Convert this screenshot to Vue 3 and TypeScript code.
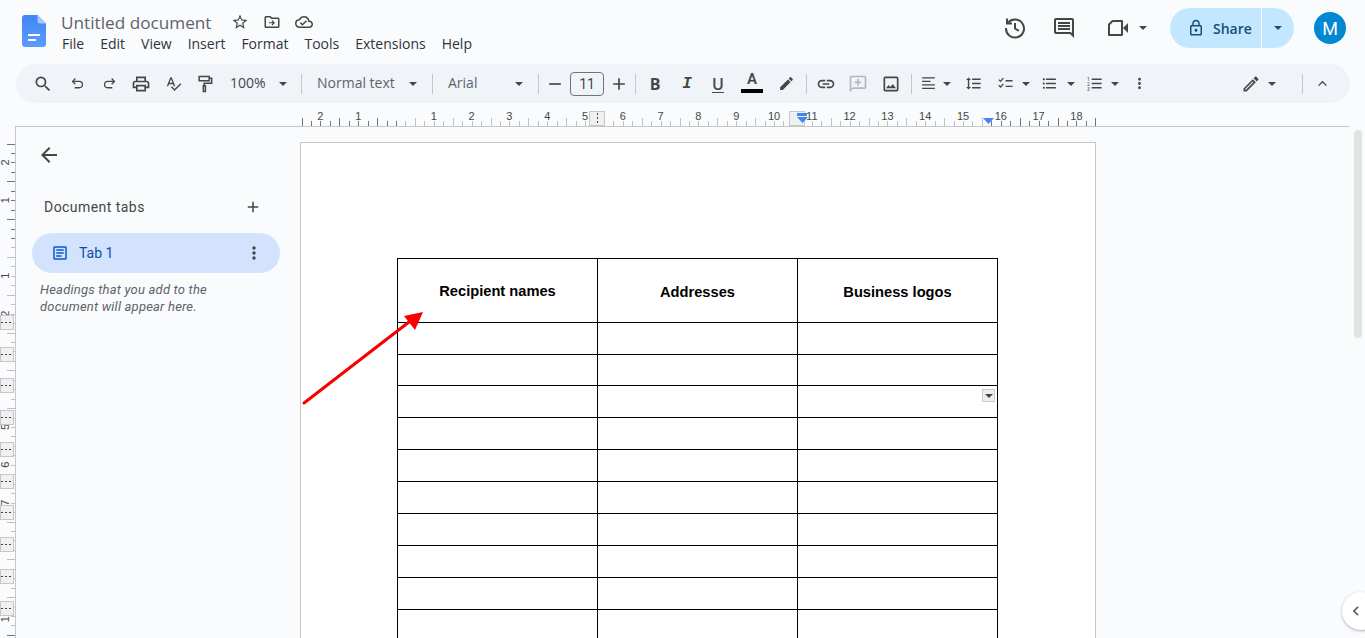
<script setup lang="ts">
import { computed } from 'vue'

interface ToolItem {
  t: 'icon' | 'caret' | 'sep' | 'gap' | 'label' | 'size' | 'letter' | 'color' | 'nums'
  w: number
  d?: string
  s?: string
  text?: string
  cls?: string
  pad?: number
}

const P = {
  search: 'M15.5 14h-.79l-.28-.27A6.471 6.471 0 0 0 16 9.5 6.5 6.5 0 1 0 9.5 16c1.61 0 3.09-.59 4.23-1.57l.27.28v.79l5 4.99L20.49 19l-4.99-5zm-6 0C7.01 14 5 11.99 5 9.5S7.01 5 9.5 5 14 7.01 14 9.5 11.99 14 9.5 14z',
  print: 'M19 8h-1V3H6v5H5c-1.66 0-3 1.34-3 3v6h4v4h12v-4h4v-6c0-1.66-1.34-3-3-3zM8 5h8v3H8V5zm8 12v2H8v-4h8v2zm2-2v-2H6v2H4v-4c0-.55.45-1 1-1h14c.55 0 1 .45 1 1v4h-2z',
  spell: 'M12.45 16h2.09L9.43 3H7.57L2.46 16h2.09l1.12-3h5.64l1.14 3zm-6.02-5L8.5 5.48 10.57 11H6.43zm15.16.59l-8.09 8.09L9.83 16l-1.41 1.41 5.09 5.09L23 13l-1.41-1.41z',
  pen: 'M3 17.25V21h3.75L17.81 9.94l-3.75-3.75L3 17.25zM20.71 7.04c.39-.39.39-1.02 0-1.41l-2.34-2.34c-.39-.39-1.02-.39-1.41 0l-1.83 1.83 3.75 3.75 1.83-1.83z',
  edit: 'M3 17.25V21h3.75L17.81 9.94l-3.75-3.75L3 17.25zM5.92 19H5v-.92l9.06-9.06.92.92L5.92 19zM20.71 5.63l-2.34-2.34c-.2-.2-.45-.29-.71-.29s-.51.1-.7.29l-1.83 1.83 3.75 3.75 1.83-1.83c.39-.39.39-1.02 0-1.41z',
  link: 'M3.9 12c0-1.71 1.39-3.1 3.1-3.1h4V7H7c-2.76 0-5 2.24-5 5s2.24 5 5 5h4v-1.9H7c-1.71 0-3.1-1.39-3.1-3.1zM8 13h8v-2H8v2zm9-6h-4v1.9h4c1.71 0 3.1 1.39 3.1 3.1s-1.39 3.1-3.1 3.1h-4V17h4c2.76 0 5-2.24 5-5s-2.24-5-5-5z',
  addComment: 'M20 2H4c-1.1 0-2 .9-2 2v18l4-4h14c1.1 0 2-.9 2-2V4c0-1.1-.9-2-2-2zm0 14H6l-2 2V4h16v12zM11 6h2v3h3v2h-3v3h-2v-3H8V9h3z',
  image: 'M19 5v14H5V5h14m0-2H5c-1.1 0-2 .9-2 2v14c0 1.1.9 2 2 2h14c1.1 0 2-.9 2-2V5c0-1.1-.9-2-2-2zm-4.86 8.86l-3 3.87L9 13.14 6 17h12l-3.86-5.14z',
  align: 'M3 3h18v1.800H3zM3 8h12v1.800H3zM3 13h18v1.800H3zM3 18h18v1.800H3z',
  spacing: 'M6 7h2.5L5 3.5 1.5 7H4v10H1.5L5 20.5 8.5 17H6V7zm4-2v2h12V5H10zm0 14h12v-2H10v2zm0-6h12v-2H10v2z',
  bullets: 'M4 10.5c-.83 0-1.5.67-1.5 1.5s.67 1.5 1.5 1.5 1.5-.67 1.5-1.5-.67-1.5-1.5-1.5zm0-6c-.83 0-1.5.67-1.5 1.5S3.17 7.500 4 7.500 5.500 6.830 5.500 6 4.830 4.500 4 4.500zm0 12c-.83 0-1.5.68-1.5 1.500s.68 1.500 1.500 1.500 1.500-.68 1.500-1.500-.67-1.500-1.500-1.500zM7 19h14v-2H7v2zm0-6h14v-2H7v2zm0-8v2h14V5H7z',
  lines: 'M8 5h14v2H8zM8 11h14v2H8zM8 17h14v2H8z',
  more: 'M12 8c1.100 0 2-.9 2-2s-.9-2-2-2-2 .9-2 2 .9 2 2 2zm0 2c-1.100 0-2 .9-2 2s.9 2 2 2 2-.9 2-2-.9-2-2-2zm0 6c-1.100 0-2 .9-2 2s.9 2 2 2 2-.9 2-2-.9-2-2-2z',
  star: 'M22 9.240l-7.190-.62L12 2 9.190 8.630 2 9.240l5.460 4.730L5.820 21 12 17.270 18.180 21l-1.630-7.030L22 9.240zM12 15.400l-3.760 2.270 1-4.280-3.320-2.880 4.380-.38L12 6.100l1.710 4.040 4.380.38-3.320 2.880 1 4.280L12 15.400z',
  folder: 'M20 6h-8l-2-2H4c-1.100 0-2 .9-2 2v12c0 1.100.9 2 2 2h16c1.100 0 2-.9 2-2V8c0-1.100-.9-2-2-2zm0 12H4V6h5.170l2 2H20v10zM12.500 9.500l3.500 3.500-3.500 3.500-1.100-1.100 1.600-1.600H8v-1.600h5l-1.600-1.600z',
  cloud: 'M19.350 10.040A7.490 7.490 0 0 0 12 4C9.110 4 6.600 5.640 5.350 8.040A5.994 5.994 0 0 0 0 14c0 3.310 2.690 6 6 6h13c2.760 0 5-2.240 5-5 0-2.640-2.050-4.780-4.650-4.960zM19 18H6c-2.210 0-4-1.790-4-4 0-2.050 1.530-3.760 3.560-3.970l1.070-.11.5-.95A5.469 5.469 0 0 1 12 6c2.620 0 4.880 1.860 5.390 4.430l.3 1.500 1.530.11A2.980 2.980 0 0 1 22 15c0 1.650-1.350 3-3 3zm-9-3.820l-2.090-2.090L6.500 13.500 10 17l6.010-6.010-1.410-1.410z',
  comment: 'M21.990 4c0-1.100-.89-2-1.990-2H4c-1.100 0-2 .9-2 2v12c0 1.100.9 2 2 2h14l4 4-.01-18zM20 4v13.170L18.830 16H4V4h16zM6 12h12v2H6zm0-3h12v2H6zm0-3h12v2H6z',
  lock: 'M18 8h-1V6c0-2.760-2.240-5-5-5S7 3.240 7 6v2H6c-1.100 0-2 .9-2 2v10c0 1.100.9 2 2 2h12c1.100 0 2-.9 2-2V10c0-1.100-.9-2-2-2zM9 6c0-1.660 1.340-3 3-3s3 1.340 3 3v2H9V6zm9 14H6V10h12v10zm-6-3c1.100 0 2-.9 2-2s-.9-2-2-2-2 .9-2 2 .9 2 2 2z',
  tabDoc: 'M19 5v14H5V5h14m0-2H5c-1.100 0-2 .9-2 2v14c0 1.100.9 2 2 2h14c1.100 0 2-.9 2-2V5c0-1.100-.9-2-2-2zM14 17H7v-2h7v2zm3-4H7v-2h10v2zm0-4H7V7h10v2z',
  plus: 'M19 13h-6v6h-2v-6H5v-2h6V5h2v6h6v2z'
}

const tools: ToolItem[] = [
  { t: 'icon', w: 32, d: P.search },
  { t: 'icon', w: 36, s: 'M9 5L5 9l4 4M5 9h9.500a4.500 4.500 0 0 1 0 9H8', cls: 'sm' },
  { t: 'icon', w: 28, s: 'M15 5l4 4-4 4M19 9H9.500a4.500 4.500 0 0 0 0 9H16', cls: 'sm' },
  { t: 'icon', w: 36, d: P.print },
  { t: 'icon', w: 28, d: P.spell, cls: 'sm' },
  { t: 'icon', w: 36, s: 'M5 3h12v5H5zM17 5h3v6h-9v3M10 14h2.500v7H10z' },
  { t: 'label', w: 48, text: '100%', pad: 7, cls: 'dark' },
  { t: 'caret', w: 24 },
  { t: 'sep', w: 13 },
  { t: 'label', w: 96, text: 'Normal text', pad: 9 },
  { t: 'caret', w: 18 },
  { t: 'sep', w: 20 },
  { t: 'label', w: 66, text: 'Arial', pad: 6 },
  { t: 'caret', w: 22 },
  { t: 'sep', w: 16 },
  { t: 'icon', w: 18, d: 'M5 11h14v2H5z' },
  { t: 'size', w: 46, text: '11' },
  { t: 'icon', w: 18, d: P.plus },
  { t: 'sep', w: 15 },
  { t: 'letter', w: 24, text: 'B', cls: 'bold' },
  { t: 'letter', w: 40, text: 'I', cls: 'ital' },
  { t: 'letter', w: 22, text: 'U', cls: 'under' },
  { t: 'color', w: 46, text: 'A' },
  { t: 'icon', w: 22, d: P.pen, cls: 'sm' },
  { t: 'sep', w: 18 },
  { t: 'icon', w: 22, d: P.link },
  { t: 'icon', w: 42, d: P.addComment, cls: 'off' },
  { t: 'icon', w: 24, d: P.image },
  { t: 'sep', w: 16 },
  { t: 'icon', w: 18, d: P.align, cls: 'sm' },
  { t: 'caret', w: 20 },
  { t: 'icon', w: 32, d: P.spacing, cls: 'sm' },
  { t: 'icon', w: 32, d: 'M12 7h10v2H12zM12 15h10v2H12z', s: 'M2.500 6.500l2.500 2.500 4-4.500M2.500 14.500l2.500 2.500 4-4.500', cls: 'sm' },
  { t: 'caret', w: 10 },
  { t: 'icon', w: 36, d: P.bullets, cls: 'sm' },
  { t: 'caret', w: 8 },
  { t: 'nums', w: 38, d: P.lines, cls: 'sm' },
  { t: 'caret', w: 4 },
  { t: 'icon', w: 44, d: P.more, cls: 'sm' },
  { t: 'gap', w: 74 },
  { t: 'icon', w: 32, d: P.edit },
  { t: 'caret', w: 10 },
  { t: 'gap', w: 18 },
  { t: 'sep', w: 14 },
  { t: 'icon', w: 26, s: 'M6.500 15L12 9.500l5.500 5.500', cls: 'sm' }
]

const menus = ['File', 'Edit', 'View', 'Insert', 'Format', 'Tools', 'Extensions', 'Help']

const hTicks = computed(() => {
  const out = []
  for (let i = -10; i <= 74; i++) {
    const x = 396 + i * 9.45
    out.push({
      x: Math.round(x) + 0.5,
      top: i % 4 === 2 || i % 4 === -2 ? 118 : 121,
      dark: x <= 398 || x >= 982
    })
  }
  return out
})
const hNums = computed(() => {
  const out = []
  for (let i = -2; i <= 18; i++) {
    if (i !== 0) out.push({ x: 396 + i * 37.8, n: Math.abs(i) })
  }
  return out
})

const vTicks = computed(() => {
  const out = []
  for (let i = -10; i <= 42; i++) {
    const y = 238 + i * 9.45
    out.push({
      y: Math.round(y) + 0.5,
      left: i % 4 === 2 || i % 4 === -2 ? 7 : 11,
      dark: y <= 240 || y >= 630
    })
  }
  return out
})
const vNums = computed(() => {
  const out = []
  for (let i = -2; i <= 10; i++) {
    if (i !== 0) out.push({ y: 238 + i * 37.8, n: Math.abs(i) })
  }
  return out
})
const rowMarks = [315, 347, 378, 410, 442, 474, 505, 537, 569, 601]

const rows = [32, 31, 32, 32, 32, 32, 32, 32, 32, 32, 32]
</script>

<template>
  <div class="app">
    <header class="topbar">
      <svg class="logo" width="24" height="32" viewBox="0 0 24 32">
        <defs>
          <linearGradient id="docBlue" x1="0" y1="0" x2="0" y2="1">
            <stop offset="0" stop-color="#4285f4" />
            <stop offset="1" stop-color="#5c9bff" />
          </linearGradient>
        </defs>
        <path d="M3 0h12.500L24 8.500V29a3 3 0 0 1-3 3H3a3 3 0 0 1-3-3V3a3 3 0 0 1 3-3z" fill="url(#docBlue)" />
        <path d="M15.500 0L24 8.500h-6a2.500 2.500 0 0 1-2.500-2.500z" fill="#a8c7fa" />
        <path d="M6 19h12v2H6zM6 24h8v2H6z" fill="#fff" />
      </svg>
      <div class="titles">
        <div class="title-row">
          <span class="doc-title">Untitled document</span>
          <svg class="ti first" viewBox="0 0 24 24"><path :d="P.star" /></svg>
          <svg class="ti" viewBox="0 0 24 24"><path :d="P.folder" /></svg>
          <svg class="ti" viewBox="0 0 24 24"><path :d="P.cloud" /></svg>
        </div>
        <nav class="menus">
          <span v-for="m in menus" :key="m">{{ m }}</span>
        </nav>
      </div>
      <div class="actions">
        <svg class="ai" viewBox="0 0 24 24">
          <path d="M5.300 6.500A9 9 0 1 1 3 12" fill="none" stroke="currentColor" stroke-width="2" />
          <path d="M4 2.500v5h5" fill="none" stroke="currentColor" stroke-width="2" />
          <path d="M12 7v5.500l3.800 2.300" fill="none" stroke="currentColor" stroke-width="2" />
        </svg>
        <svg class="ai comment" viewBox="0 0 24 24"><path :d="P.comment" /></svg>
        <svg class="ai video" viewBox="0 0 24 24">
          <path d="M6.500 5H16v14H3V8.500z" fill="none" stroke="currentColor" stroke-width="2" stroke-linejoin="round" />
          <path d="M17 12l5-5v10z" fill="currentColor" />
        </svg>
        <svg class="caret-top" width="8" height="4" viewBox="0 0 10 5"><path d="M0 0h10L5 5z" /></svg>
        <div class="share">
          <div class="share-main">
            <svg width="18" height="18" viewBox="0 0 24 24"><path :d="P.lock" /></svg>
            <span>Share</span>
          </div>
          <div class="share-drop">
            <svg width="8" height="4" viewBox="0 0 10 5"><path d="M0 0h10L5 5z" /></svg>
          </div>
        </div>
        <div class="avatar">M</div>
      </div>
    </header>

    <div class="toolbar">
      <template v-for="(it, i) in tools" :key="i">
        <div class="tool" :class="[it.t, it.cls]" :style="{ width: it.w + 'px', paddingLeft: (it.pad || 0) + 'px' }">
          <svg v-if="it.t === 'icon' || it.t === 'nums'" class="tool-icon" viewBox="0 0 24 24">
            <path v-if="it.d" :d="it.d" />
            <path v-if="it.s" :d="it.s" class="stroked" />
            <template v-if="it.t === 'nums'">
              <text x="1.500" y="8" class="tiny">1</text>
              <text x="1.500" y="15" class="tiny">2</text>
              <text x="1.500" y="22" class="tiny">3</text>
            </template>
          </svg>
          <svg v-else-if="it.t === 'caret'" class="caret-svg" width="8" height="4" viewBox="0 0 10 5"><path d="M0 0h10L5 5z" /></svg>
          <i v-else-if="it.t === 'sep'" class="sep-line"></i>
          <span v-else-if="it.t === 'label'" class="label-text">{{ it.text }}</span>
          <span v-else-if="it.t === 'size'" class="size-box">{{ it.text }}</span>
          <span v-else-if="it.t === 'letter'">{{ it.text }}</span>
          <span v-else-if="it.t === 'color'" class="color-a">{{ it.text }}<i class="color-bar"></i></span>
        </div>
      </template>
    </div>

    <div class="hruler">
      <svg width="800" height="23" viewBox="300 103 800 23">
        <line v-for="t in hTicks" :key="t.x" :x1="t.x" :x2="t.x" :y1="t.top" y2="126" :stroke="t.dark ? '#70757a' : '#bdc1c6'" />
        <text v-for="n in hNums" :key="n.x" :x="n.x" y="120" text-anchor="middle" class="rnum">{{ n.n }}</text>
        <rect x="589.500" y="111.500" width="15" height="14" fill="#eef0f2" stroke="#c7c7c7" />
        <line x1="597.500" x2="597.500" y1="113" y2="124" stroke="#444" stroke-dasharray="2 2" />
        <rect x="789.500" y="111.500" width="15" height="14" fill="#eef0f2" stroke="#c7c7c7" />
        <rect x="797" y="113" width="10" height="3" fill="#4285f4" />
        <path d="M797 117h11l-5.500 6z" fill="#4285f4" />
        <path d="M983 118h11l-5.500 6z" fill="#4285f4" />
      </svg>
    </div>

    <div class="workspace">
      <svg class="vruler" width="15" height="512" viewBox="0 126 15 512">
        <line v-for="t in vTicks" :key="t.y" :x1="t.left" x2="15" :y1="t.y" :y2="t.y" :stroke="t.dark ? '#70757a' : '#bdc1c6'" />
        <text v-for="n in vNums" :key="n.y" x="0" y="0" text-anchor="middle" class="rnum" :transform="`translate(9 ${n.y}) rotate(-90)`">{{ n.n }}</text>
        <g v-for="y in rowMarks" :key="y">
          <rect x="0.500" :y="y + 0.500" width="13" height="14" fill="#eef0f2" stroke="#c7c7c7" />
          <line x1="1" x2="13" :y1="y + 7.500" :y2="y + 7.500" stroke="#444" stroke-dasharray="2 2" />
        </g>
      </svg>

      <aside class="sidebar">
        <svg class="back" viewBox="0 0 24 24"><path d="M20 11H7.830l5.590-5.590L12 4l-8 8 8 8 1.410-1.410L7.830 13H20v-2z" /></svg>
        <div class="tabs-head">
          <span>Document tabs</span>
          <svg class="head-plus" viewBox="0 0 24 24"><path :d="P.plus" /></svg>
        </div>
        <div class="tab-pill">
          <svg class="tab-icon" viewBox="0 0 24 24"><path :d="P.tabDoc" /></svg>
          <span class="tab-name">Tab 1</span>
          <svg class="tab-more" viewBox="0 0 24 24"><path :d="P.more" /></svg>
        </div>
        <p class="hint">Headings that you add to the<br />document will appear here.</p>
      </aside>

      <main class="page">
        <table class="grid">
          <colgroup>
            <col class="c" /><col class="c" /><col class="c" />
          </colgroup>
          <tr class="head-row">
            <th class="raised">Recipient names</th>
            <th>Addresses</th>
            <th>Business logos</th>
          </tr>
          <tr v-for="(h, r) in rows" :key="r" :style="{ height: h + 'px' }">
            <td></td>
            <td></td>
            <td :class="{ 'has-drop': r === 2 }"><span v-if="r === 2" class="cell-drop"><i></i></span></td>
          </tr>
        </table>
        <svg class="arrow" width="130" height="100" viewBox="0 0 130 100">
          <line x1="3" y1="92" x2="108" y2="11" stroke="#f60000" stroke-width="3" stroke-linecap="round" />
          <path d="M122 1L103 5l11 14z" fill="#f60000" />
        </svg>
      </main>

      <div class="scrollbar"></div>
      <div class="side-toggle">
        <svg width="14" height="14" viewBox="0 0 24 24"><path d="M15.500 5L8.500 12l7 7" fill="none" stroke="#5f6368" stroke-width="3" /></svg>
      </div>
    </div>
  </div>
</template>

<style>
html, body { margin: 0; background: #f9fbfd; overflow: hidden; }
</style>

<style scoped>
.app {
  position: relative;
  width: 1365px;
  height: 638px;
  overflow: hidden;
  display: flex;
  flex-direction: column;
  background: #f9fbfd;
  font-family: Roboto, "Liberation Sans", sans-serif;
  color: #444746;
}

/* top bar */
.topbar {
  height: 64px;
  flex: none;
  display: flex;
  align-items: flex-start;
}
.logo { margin: 15px 15px 0 22px; flex: none; }
.titles { display: flex; flex-direction: column; }
.title-row { height: 26px; margin-top: 9px; display: flex; align-items: center; }
.doc-title { font-family: "Open Sans", sans-serif; font-size: 17.200px; color: #5f6368; width: 151px; white-space: nowrap; }
.ti { width: 18px; height: 18px; margin-right: 14px; fill: #444746; }
.ti.first { margin-left: 19px; }
.menus { display: flex; gap: 16px; font-family: "Open Sans", sans-serif; font-size: 14px; line-height: 18px; margin-left: 1px; color: #303437; }
.actions { margin-left: auto; display: flex; align-items: center; height: 40px; margin-top: 8px; margin-right: 19px; }
.ai { width: 24px; height: 24px; fill: #444746; color: #444746; }
.ai.comment { margin-left: 25px; }
.ai.video { margin-left: 30px; }
.caret-top { fill: #444746; margin-left: 9px; margin-right: 23px; }
.share { display: flex; height: 40px; width: 124px; border-radius: 20px; overflow: hidden; }
.share-main {
  width: 91px;
  background: #c2e7ff;
  display: flex;
  align-items: center;
  gap: 8px;
  padding-left: 17px;
  box-sizing: border-box;
  color: #154f7c;
  fill: #154f7c;
  font-family: "Open Sans", sans-serif;
  font-size: 14px;
  font-weight: 600;
}
.share-drop {
  flex: 1;
  margin-left: 1px;
  background: #c2e7ff;
  display: flex;
  align-items: center;
  justify-content: center;
  fill: #154f7c;
}
.avatar {
  width: 32px;
  height: 32px;
  border-radius: 50%;
  background: #0288d1;
  color: #fff;
  font-size: 18px;
  display: flex;
  align-items: center;
  justify-content: center;
  margin-left: 20px;
}

/* toolbar */
.toolbar {
  height: 39px;
  flex: none;
  margin: 0 15px 0 16px;
  padding-left: 11px;
  background: #f0f4f9;
  border-radius: 20px;
  display: flex;
  align-items: center;
}
.tool {
  flex: none;
  height: 100%;
  display: flex;
  align-items: center;
  justify-content: center;
  box-sizing: border-box;
  font-size: 14px;
  color: #5f6368;
  white-space: nowrap;
}
.tool.label { justify-content: flex-start; font-family: "Open Sans", sans-serif; font-size: 14px; }
.label-text { margin-top: -2px; }
.tool.label.dark { color: #444746; }
.tool-icon { width: 20px; height: 20px; flex: none; fill: #444746; }
.tool.sm .tool-icon { width: 17px; height: 17px; }
.tool.off .tool-icon { fill: #b4b8bb; }
.stroked { fill: none; stroke: #444746; stroke-width: 1.800; }
.tiny { font-size: 7px; font-family: Roboto, sans-serif; fill: #444746; }
.caret-svg { flex: none; fill: #444746; }
.sep-line { display: block; width: 1px; height: 20px; background: #c7c7c7; }
.size-box {
  width: 32px;
  height: 22px;
  line-height: 22px;
  border: 1px solid #70757a;
  border-radius: 4px;
  text-align: center;
  color: #444746;
  font-size: 14px;
}
.tool.letter { font-size: 16px; color: #444746; font-family: "Open Sans", sans-serif; }
.tool.bold { font-weight: 700; }
.tool.ital { font-family: "Liberation Mono", monospace; font-style: italic; font-weight: 700; }
.tool.under { text-decoration: underline; text-underline-offset: 2px; font-weight: 600; }
.color-a { position: relative; display: block; font-size: 15px; color: #444746; line-height: 17px; margin-top: -9px; width: 22px; text-align: center; font-weight: 600; }
.color-bar { position: absolute; left: 0; top: 18px; width: 22px; height: 4px; background: #000; }

/* rulers */
.hruler { height: 23px; flex: none; padding-left: 300px; }
.hruler svg { display: block; }
.rnum { font-family: "Liberation Sans", sans-serif; font-size: 11px; fill: #444746; }
.workspace {
  flex: 1;
  min-height: 0;
  position: relative;
  display: flex;
  align-items: flex-start;
}
.workspace::before {
  content: "";
  position: absolute;
  left: 15px;
  right: 15px;
  top: 0;
  height: 1px;
  background: #c7c7c7;
}
.vruler { flex: none; display: block; border-right: 1px solid #c7c7c7; }

/* sidebar */
.sidebar { width: 284px; flex: none; box-sizing: border-box; padding: 0 20px 0 16px; }
.back { display: block; width: 24px; height: 24px; margin: 17px 0 0 5px; fill: #444746; }
.tabs-head { display: flex; align-items: center; justify-content: space-between; margin: 30px 0 0 12px; height: 20px; font-size: 14px; color: #444746; letter-spacing: 0.450px; }
.head-plus { width: 18px; height: 18px; fill: #444746; margin-right: 18px; }
.tab-pill {
  height: 40px;
  margin-top: 16px;
  border-radius: 20px;
  background: #d3e3fd;
  display: flex;
  align-items: center;
  padding: 0 17px 0 19px;
}
.tab-icon { width: 18px; height: 18px; fill: #0b57d0; }
.tab-name { margin-left: 10px; font-size: 14px; color: #0b4fa8; }
.tab-more { width: 20px; height: 20px; fill: #444746; margin-left: auto; margin-right: -1px; }
.hint { margin: 8px 0 0 8px; font-size: 13px; letter-spacing: 0.200px; line-height: 17px; font-style: italic; color: #5f6368; white-space: nowrap; }

/* page */
.page {
  position: relative;
  width: 796px;
  height: 560px;
  flex: none;
  margin-top: 16px;
  background: #fff;
  border: 1px solid #c7c7c7;
  box-sizing: border-box;
  padding: 115px 0 0 96px;
}
.grid { border-collapse: collapse; table-layout: fixed; width: 601px; }
.grid th, .grid td { border: 1px solid #000; padding: 0; }
.grid .c { width: 200px; }
.head-row { height: 64px; }
.grid th { font-family: "Liberation Sans", sans-serif; font-size: 14.670px; font-weight: 700; color: #000; text-align: center; padding-top: 3px; }
.grid th.raised { padding-top: 0; }
.has-drop { position: relative; }
.cell-drop {
  position: absolute;
  right: 2px;
  top: 3px;
  width: 13px;
  height: 13px;
  box-sizing: border-box;
  background: #eee;
  border: 1px solid #ccc;
  display: flex;
  align-items: center;
  justify-content: center;
}
.cell-drop i { width: 0; height: 0; border-left: 4px solid transparent; border-right: 4px solid transparent; border-top: 4px solid #444; }
.arrow { position: absolute; left: 0; top: 168px; }

.scrollbar { position: absolute; left: 1354px; top: 4px; width: 8px; height: 208px; border-radius: 4px; background: #e1e3e1; }
.side-toggle {
  position: absolute;
  left: 1342px;
  top: 466px;
  width: 38px;
  height: 38px;
  border-radius: 50%;
  background: #fff;
  box-shadow: 0 1px 3px rgba(60, 64, 67, 0.4);
  display: flex;
  align-items: center;
  padding-left: 7px;
  box-sizing: border-box;
}
</style>
